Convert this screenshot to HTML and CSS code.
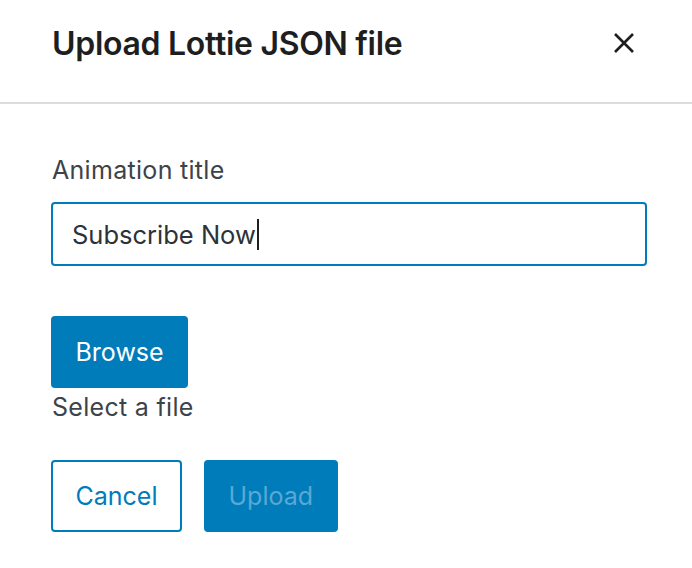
FILE: index.html
```html
<!DOCTYPE html>
<html lang="en">
<head>
  <meta charset="UTF-8">
  <meta name="viewport" content="width=device-width, initial-scale=1.0">
  <title>Upload Lottie JSON file</title>
  <link rel="stylesheet" href="styles.css">
</head>
<body>

  <div class="modal">
    <!-- Header -->
    <div class="modal-header">
      <h1 class="modal-title">Upload Lottie JSON file</h1>
      <button class="close-button" aria-label="Close">
        <svg width="24" height="24" viewBox="0 0 24 24">
          <path d="M3 3 L21 21 M21 3 L3 21" stroke="#1e1e1e" stroke-width="2.6" fill="none"/>
        </svg>
      </button>
    </div>

    <!-- Form -->
    <div class="modal-content">
      <label class="field-label" for="animTitle">Animation title</label>
      <div class="text-input" id="animTitle">Subscribe Now<span class="caret"></span></div>

      <div class="file-picker">
        <button class="btn btn-primary">Browse</button>
        <div class="file-name">Select a file</div>
      </div>

      <div class="actions">
        <button class="btn btn-secondary">Cancel</button>
        <button class="btn btn-primary btn-disabled">Upload</button>
      </div>
    </div>
  </div>

</body>
</html>
```

FILE: styles.css
```css
body {
  margin: 0;
  font-family: Inter, "Liberation Sans", sans-serif;
  background-color: #fff;
  color: #1e1e1e;
}

.modal {
  width: 692px;
  height: 568px;
}

.modal-header {
  height: 104px;
  box-sizing: border-box;
  border-bottom: 2px solid #dcdcde;
  display: flex;
  align-items: center;
  justify-content: space-between;
  padding: 0 56px 16px 52px;
}

.modal-title {
  margin: 0;
  font-size: 32px;
  font-weight: 600;
  color: #1e1e1e;
  letter-spacing: -0.3px;
}

.close-button {
  background: none;
  border: none;
  padding: 0;
  width: 24px;
  height: 24px;
  cursor: pointer;
}

.modal-content {
  padding: 50px 45px 0 51px;
  display: flex;
  flex-direction: column;
}

.field-label {
  font-size: 25px;
  letter-spacing: 0.3px;
  color: #3c434a;
  margin-left: 1px;
  line-height: 32px;
}

.text-input {
  margin-top: 16px;
  height: 60px;
  border: 2px solid #007cba;
  border-radius: 4px;
  display: flex;
  align-items: center;
  padding: 0 19px;
  font-size: 25.5px;
  color: #2c3338;
}

.caret {
  display: inline-block;
  width: 2px;
  height: 31px;
  background-color: #1e1e1e;
  margin-left: 1px;
}

.file-picker {
  margin-top: 50px;
  display: flex;
  flex-direction: column;
  align-items: flex-start;
}

.file-name {
  font-size: 25px;
  letter-spacing: 0.3px;
  color: #3c434a;
  line-height: 38px;
  margin-left: 1px;
}

.btn {
  height: 72px;
  padding: 0 22.5px;
  font-family: inherit;
  font-size: 25px;
  border-radius: 4px;
  border: 2px solid #007cba;
  cursor: pointer;
}

.btn-primary {
  background-color: #007cba;
  color: #fff;
}

.btn-secondary {
  background-color: #fff;
  color: #007cba;
}

.btn-disabled {
  color: #5ba8d4;
  cursor: default;
}

.actions {
  margin-top: 34px;
  display: flex;
  gap: 22px;
}
```
